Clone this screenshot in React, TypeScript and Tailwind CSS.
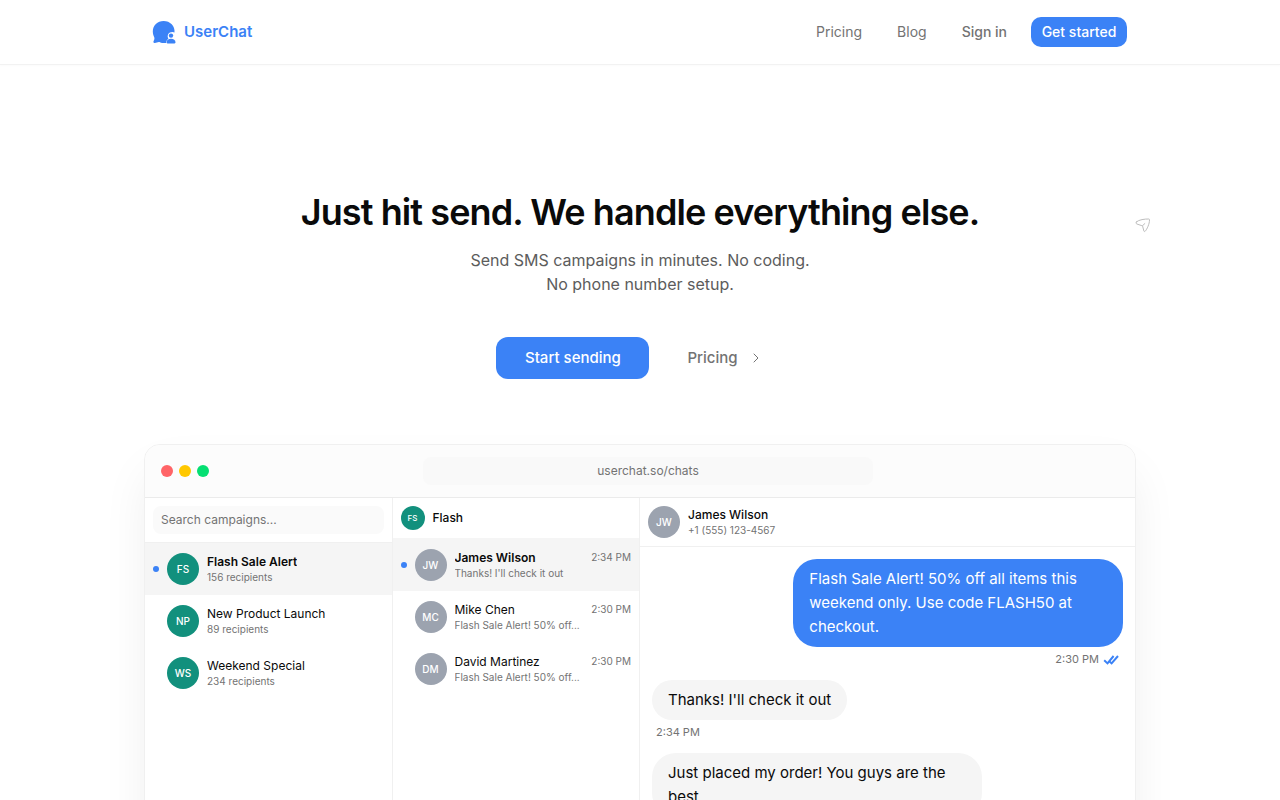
import React from 'react';
import { ChevronRight } from 'lucide-react';

interface Campaign {
  initials: string;
  name: string;
  recipients: string;
  active?: boolean;
}

interface Contact {
  initials: string;
  name: string;
  preview: string;
  time: string;
  active?: boolean;
}

interface Message {
  text: string;
  time?: string;
  sent?: boolean;
}

const campaigns: Campaign[] = [
  { initials: 'FS', name: 'Flash Sale Alert', recipients: '156 recipients', active: true },
  { initials: 'NP', name: 'New Product Launch', recipients: '89 recipients' },
  { initials: 'WS', name: 'Weekend Special', recipients: '234 recipients' },
];

const contacts: Contact[] = [
  { initials: 'JW', name: 'James Wilson', preview: "Thanks! I'll check it out", time: '2:34 PM', active: true },
  { initials: 'MC', name: 'Mike Chen', preview: 'Flash Sale Alert! 50% off...', time: '2:30 PM' },
  { initials: 'DM', name: 'David Martinez', preview: 'Flash Sale Alert! 50% off...', time: '2:30 PM' },
];

const messages: Message[] = [
  { text: 'Flash Sale Alert! 50% off all items this weekend only. Use code FLASH50 at checkout.', time: '2:30 PM', sent: true },
  { text: "Thanks! I'll check it out", time: '2:34 PM' },
  { text: 'Just placed my order! You guys are the best' },
];

function Logo() {
  return (
    <svg className="size-6" viewBox="0 0 24 24" fill="none" aria-hidden="true">
      <path
        d="M11.6 1C5.4 1 .8 5.500.8 11.400c0 2.600.9 4.500 1.500 6 .4 1-.1 2.300-.7 3.700-.5 1.300.1 2.200 1.300 1.900l4-1c.8-.2 1.200.4 2 .7 1.300.5 3.700.5 5.100.3.2-1.900 1-3.300 2.400-4.200-1.800-3.300.2-6.700 4-6.700.9 0 1.600.2 2.100.5C23.300 5.800 18 1 11.600 1Z"
        fill="#3b82f6"
      />
      <circle cx="19" cy="15.600" r="2.200" fill="#3b82f6" />
      <path d="M14.500 22.300c0-2.300 1.900-3.500 4.500-3.500s4.500 1.200 4.500 3.500c0 .7-.4 1.200-1 1.200h-7c-.6 0-1-.5-1-1.200Z" fill="#3b82f6" />
    </svg>
  );
}

function PaperPlane() {
  return (
    <svg className="size-4" viewBox="0 0 16 16" fill="none" stroke="#bdbdbd" strokeLinecap="round" strokeLinejoin="round" aria-hidden="true">
      <path d="M1.500 4.800C3.800 2.700 10 1.900 13.700 2c.6 0 .8.300.8.800.1 4-2.600 9.600-4.300 11.400-.5.500-1.100.4-1.300-.2L7.700 9.500c-.1-.5-.3-.7-.8-.8L1.900 7c-1-.4-1.200-1.500-.4-2.200Z" />
      <path d="M7.500 8.700 9.800 6.600" />
    </svg>
  );
}

function DoubleCheck() {
  return (
    <svg className="h-4 w-4" viewBox="0 0 16 16" fill="none" stroke="#3b82f6" strokeWidth="2" role="img" aria-label="Delivered">
      <path d="M1.200 8.300 4.500 11.400 10.600 4" />
      <path d="M6 9 8.600 11.400 15 4" />
    </svg>
  );
}

function Avatar({ initials, className }: { initials: string; className: string }) {
  return (
    <div className={`flex shrink-0 items-center justify-center rounded-full font-medium text-white ${className}`}>
      {initials}
    </div>
  );
}

function ActiveDot({ active }: { active?: boolean }) {
  return <span className={`size-1.5 shrink-0 rounded-full ${active ? 'bg-[#3b82f6]' : ''}`} />;
}

export default function App() {
  return (
    <div className="min-h-screen overflow-x-hidden bg-white font-['Inter',sans-serif] text-[#0a0a0a]">
      <header className="border-b border-[#f2f2f2] shadow-xs shadow-black/2">
        <div className="mx-auto flex h-16 max-w-5xl items-center justify-between pr-[25px] pl-6">
          <a href="/" className="flex items-center gap-2 text-[15px] font-semibold text-[#3b82f6]">
            <Logo />
            UserChat
          </a>
          <nav className="flex items-center gap-[35px] text-sm text-[#737373]">
            <a href="/pricing">Pricing</a>
            <a href="/blog">Blog</a>
            <div className="flex items-center gap-6 font-medium">
              <a href="/login">Sign in</a>
              <a href="/signup" className="flex h-[30px] w-24 items-center justify-center rounded-[10px] bg-[#3b82f6] text-white">
                Get started
              </a>
            </div>
          </nav>
        </div>
      </header>

      <main className="relative">
        {/* Hero */}
        <section className="flex flex-col items-center px-6 pt-[123px] text-center">
          <h1 className="text-4xl leading-[48px] font-semibold tracking-tight">
            Just hit send. We handle everything else.
          </h1>
          <p className="mt-3 text-base text-[#5c5c5c]">
            Send SMS campaigns in minutes. No coding.
            <br />
            No phone number setup.
          </p>
          <div className="mt-[41px] flex items-center gap-4 text-[15px] font-medium">
            <a href="/signup" className="flex h-[42px] w-[153px] items-center justify-center rounded-xl bg-[#3b82f6] text-white">
              Start sending
            </a>
            <a href="/pricing" className="flex h-[42px] items-center gap-[10px] pr-5 pl-[22px] text-[#737373]">
              Pricing
              <ChevronRight className="size-4" strokeWidth={1.5} />
            </a>
          </div>
        </section>
        <div className="absolute top-[152px] right-[129px]">
          <PaperPlane />
        </div>

        {/* Product preview */}
        <section className="mx-auto mt-[65px] max-w-5xl px-4 pb-24">
          <div className="overflow-hidden rounded-2xl border border-[#f0f0f0] bg-white shadow-[0_25px_50px_-6px_rgba(0,0,0,0.08)]">
            <div className="flex items-center justify-between border-b border-[#ebebeb] bg-[#fcfcfc] px-4 py-3">
              <div className="flex gap-1.5">
                <span className="size-3 rounded-full bg-[#ff6467]" />
                <span className="size-3 rounded-full bg-[#ffc800]" />
                <span className="size-3 rounded-full bg-[#05df72]" />
              </div>
              <div className="flex h-7 w-[450px] items-center justify-center rounded-lg bg-[#f9f9f9] text-xs text-[#737373]">
                userchat.so/chats
              </div>
              <div className="w-8" />
            </div>

            <div className="grid min-h-[480px] grid-cols-[1fr_1fr_2fr]">
              <div className="min-w-0 border-r border-[#f0f0f0]">
                <div className="border-b border-[#f0f0f0] p-2">
                  <input
                    type="text"
                    aria-label="Search campaigns"
                    placeholder="Search campaigns..."
                    className="block h-7 w-full rounded-lg bg-[#fafafa] px-2 pb-0.5 text-xs placeholder:text-[#737373]"
                  />
                </div>
                <ul>
                  {campaigns.map((c) => (
                    <li key={c.name} className={`flex h-[52px] items-center gap-2 px-2 ${c.active ? 'bg-[#f5f5f5]' : ''}`}>
                      <ActiveDot active={c.active} />
                      <Avatar initials={c.initials} className="size-8 bg-[#12907d] text-[10px]" />
                      <div className="min-w-0">
                        <div className={`truncate text-xs leading-4 ${c.active ? 'font-semibold' : ''}`}>{c.name}</div>
                        <div className="truncate text-[10px] leading-[14px] text-[#737373]">{c.recipients}</div>
                      </div>
                    </li>
                  ))}
                </ul>
              </div>

              <div className="min-w-0 border-r border-[#f0f0f0]">
                <div className="flex items-center gap-2 border-b border-[#f5f5f5] p-2 text-xs font-medium">
                  <Avatar initials="FS" className="size-6 bg-[#12907d] text-[8px]" />
                  Flash
                </div>
                <ul>
                  {contacts.map((c) => (
                    <li key={c.name} className={`flex h-[52px] items-center gap-2 px-2 ${c.active ? 'bg-[#f5f5f5]' : ''}`}>
                      <ActiveDot active={c.active} />
                      <Avatar initials={c.initials} className="size-8 bg-[#9ca3af] text-[10px]" />
                      <div className="min-w-0 flex-1">
                        <div className="flex items-start justify-between gap-2">
                          <span className={`truncate text-xs leading-4 ${c.active ? 'font-semibold' : ''}`}>{c.name}</span>
                          <span className="shrink-0 text-[10px] leading-[14px] text-[#737373]">{c.time}</span>
                        </div>
                        <div className="truncate text-[10px] leading-[14px] text-[#737373]">{c.preview}</div>
                      </div>
                    </li>
                  ))}
                </ul>
              </div>

              <div className="min-w-0">
                <div className="flex items-center gap-2 border-b border-[#f0f0f0] p-2">
                  <Avatar initials="JW" className="size-8 bg-[#9ca3af] text-[10px]" />
                  <div>
                    <div className="text-xs leading-4 font-medium">James Wilson</div>
                    <div className="text-[10px] leading-[14px] text-[#737373]">+1 (555) 123-4567</div>
                  </div>
                </div>
                <div className="flex flex-col gap-3 p-3">
                  {messages.map((m) => (
                    <div key={m.text} className={`flex flex-col gap-1 ${m.sent ? 'items-end' : 'items-start'}`}>
                      <div className={`max-w-[70%] rounded-3xl px-4 py-2 text-[15px] leading-6 ${m.sent ? 'bg-[#3b82f6] text-white' : 'bg-[#f5f5f5]'}`}>
                        {m.text}
                      </div>
                      {m.time && (
                        <div className="flex items-center gap-1 px-1 text-[11px] leading-[17px] text-[#737373]">
                          {m.time}
                          {m.sent && <DoubleCheck />}
                        </div>
                      )}
                    </div>
                  ))}
                </div>
              </div>
            </div>
          </div>
        </section>
      </main>
    </div>
  );
}
